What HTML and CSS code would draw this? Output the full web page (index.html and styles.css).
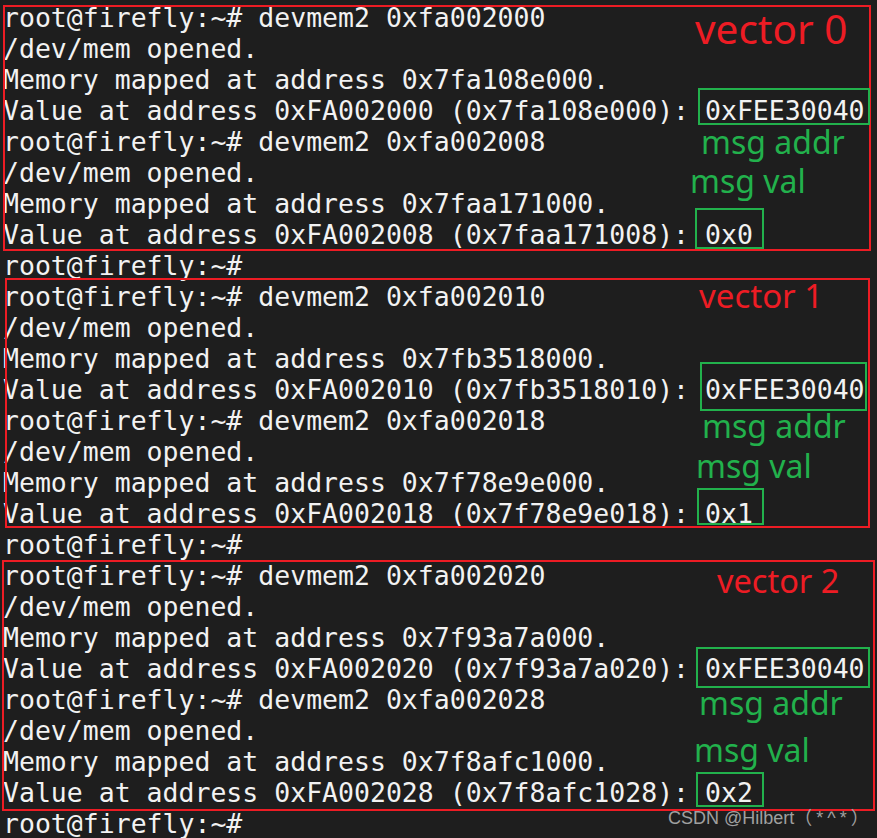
FILE: index.html
```html
<!DOCTYPE html>
<html>
<head>
<meta charset="utf-8">
<link rel="stylesheet" href="styles.css">
</head>
<body>
<div class="screen">
  <div class="terminal">
    <div class="line">root@firefly:~# devmem2 0xfa002000</div>
    <div class="line">/dev/mem opened.</div>
    <div class="line">Memory mapped at address 0x7fa108e000.</div>
    <div class="line">Value at address 0xFA002000 (0x7fa108e000): 0xFEE30040</div>
    <div class="line">root@firefly:~# devmem2 0xfa002008</div>
    <div class="line">/dev/mem opened.</div>
    <div class="line">Memory mapped at address 0x7faa171000.</div>
    <div class="line">Value at address 0xFA002008 (0x7faa171008): 0x0</div>
    <div class="line">root@firefly:~#</div>
    <div class="line">root@firefly:~# devmem2 0xfa002010</div>
    <div class="line">/dev/mem opened.</div>
    <div class="line">Memory mapped at address 0x7fb3518000.</div>
    <div class="line">Value at address 0xFA002010 (0x7fb3518010): 0xFEE30040</div>
    <div class="line">root@firefly:~# devmem2 0xfa002018</div>
    <div class="line">/dev/mem opened.</div>
    <div class="line">Memory mapped at address 0x7f78e9e000.</div>
    <div class="line">Value at address 0xFA002018 (0x7f78e9e018): 0x1</div>
    <div class="line">root@firefly:~#</div>
    <div class="line">root@firefly:~# devmem2 0xfa002020</div>
    <div class="line">/dev/mem opened.</div>
    <div class="line">Memory mapped at address 0x7f93a7a000.</div>
    <div class="line">Value at address 0xFA002020 (0x7f93a7a020): 0xFEE30040</div>
    <div class="line">root@firefly:~# devmem2 0xfa002028</div>
    <div class="line">/dev/mem opened.</div>
    <div class="line">Memory mapped at address 0x7f8afc1000.</div>
    <div class="line">Value at address 0xFA002028 (0x7f8afc1028): 0x2</div>
    <div class="line">root@firefly:~#</div>
  </div>

  <div class="mark red r1"></div>
  <div class="mark red r2"></div>
  <div class="mark red r3"></div>

  <div class="mark green g1"></div>
  <div class="mark green g2"></div>
  <div class="mark green g3"></div>
  <div class="mark green g4"></div>
  <div class="mark green g5"></div>
  <div class="mark green g6"></div>

  <div class="note red-text v0">vector 0</div>
  <div class="note red-text v1">vector 1</div>
  <div class="note red-text v2">vector 2</div>

  <div class="note green-text a0">msg addr</div>
  <div class="note green-text m0">msg val</div>
  <div class="note green-text a1">msg addr</div>
  <div class="note green-text m1">msg val</div>
  <div class="note green-text a2">msg addr</div>
  <div class="note green-text m2">msg val</div>

  <div class="watermark">CSDN @Hilbert<span class="emote">（*^*）</span></div>
</div>
</body>
</html>
```

FILE: styles.css
```css
html, body {
  margin: 0;
  padding: 0;
  background: #1e1e1e;
}

.screen {
  position: relative;
  width: 877px;
  height: 838px;
  overflow: hidden;
  background: #1e1e1e;
}

.terminal {
  padding: 2px 0 0 3px;
  font-family: "DejaVu Sans Mono", monospace;
  font-size: 26.5px;
  line-height: 31px;
  color: #f2f2f2;
}

.line {
  white-space: pre;
  height: 31px;
}

.mark {
  position: absolute;
  box-sizing: border-box;
  border: 2px solid;
}

.red { border-color: #ed1c24; }
.green { border-color: #22b14c; }

.r1 { left: 3px; top: 5px; width: 868px; height: 246px; }
.r2 { left: 5px; top: 278px; width: 865px; height: 250px; }
.r3 { left: 2px; top: 560px; width: 873px; height: 251px; }

.g1 { left: 698px; top: 88px; width: 172px; height: 37px; }
.g2 { left: 695px; top: 208px; width: 69px; height: 41px; }
.g3 { left: 700px; top: 362px; width: 167px; height: 49px; }
.g4 { left: 697px; top: 488px; width: 67px; height: 37px; }
.g5 { left: 696px; top: 647px; width: 174px; height: 41px; }
.g6 { left: 696px; top: 772px; width: 68px; height: 35px; }

.note {
  position: absolute;
  font-family: "Noto Sans", sans-serif;
  line-height: 1;
  white-space: nowrap;
}

.red-text { color: #ed1c24; }
.green-text { color: #22b14c; font-size: 32px; }

.v0 { left: 695px; top: 9px; font-size: 40.5px; }
.v1 { left: 699px; top: 279px; font-size: 33px; }
.v2 { left: 717px; top: 565px; font-size: 32.5px; }

.a0 { left: 701px; top: 126px; }
.m0 { left: 690px; top: 165px; }
.a1 { left: 702px; top: 410px; }
.m1 { left: 696px; top: 450px; }
.a2 { left: 699px; top: 687px; }
.m2 { left: 694px; top: 734px; }

.watermark {
  position: absolute;
  left: 668px;
  top: 809px;
  font-family: "Liberation Sans", "Noto Sans CJK SC", sans-serif;
  font-size: 18px;
  line-height: 1;
  color: #a0a0a0;
  white-space: nowrap;
}

.emote {
  letter-spacing: 4px;
}
```
